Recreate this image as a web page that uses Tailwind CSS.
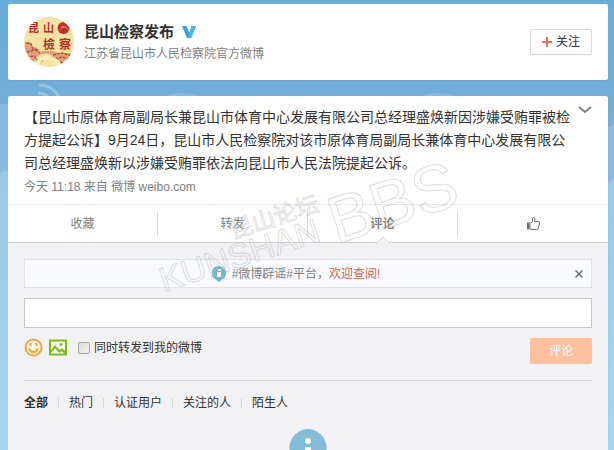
<!DOCTYPE html>
<html lang="zh-CN">
<head>
  <meta charset="UTF-8" />
  <meta name="viewport" content="width=device-width, initial-scale=1.0" />
  <title>昆山检察发布</title>
  <script src="https://cdn.jsdelivr.net/npm/@tailwindcss/browser@4"></script>
</head>
<body class="relative h-screen overflow-x-hidden overflow-y-auto [scrollbar-width:none] bg-[#a8d3ec] font-['Liberation_Sans','Noto_Sans_CJK_SC',sans-serif] text-xs text-[#333]">

  <!-- Sky decoration -->
  <svg class="absolute inset-0 w-full h-[450px]" viewBox="0 0 614 450" preserveAspectRatio="none" aria-hidden="true">
    <linearGradient id="sky" x2="0" y2="1">
      <stop stop-color="#6aaed8" />
      <stop offset=".25" stop-color="#72aed8" />
      <stop offset="1" stop-color="#a8d3ec" />
    </linearGradient>
    <linearGradient id="cloud" x2="0" y2="1">
      <stop stop-color="#9bc8e5" />
      <stop offset="1" stop-color="#a8d5ef" />
    </linearGradient>
    <path d="M0 0h614v450H0z" fill="url(#sky)" />
    <g fill="none" stroke="#93c4e4" stroke-width="3">
      <path d="M39 85c11 0 21 8 22 19" />
      <path d="M38 93c7 0 13 5 14 12" />
    </g>
    <ellipse cx="182" cy="106" rx="24" ry="13" fill="#82badf" />
    <ellipse cx="438" cy="106" rx="26" ry="13" fill="#82badf" />
    <path d="M0 104h10v80H0zM606 128l8-4v70h-8z" fill="#88bbdf" />
    <path d="M0 173q5-3 10-3v280H0z" fill="url(#cloud)" />
    <path d="M606 185l8-7v272h-8z" fill="url(#cloud)" />
  </svg>

  <main class="relative pt-1 pl-2 pr-1.5">

    <!-- Account header -->
    <header class="flex items-center rounded-xs bg-white px-4 py-[13px] shadow-xs">
      <svg class="size-[50px] shrink-0" viewBox="0 0 50 50" role="img" aria-label="昆山检察">
        <clipPath id="avatar"><circle cx="25" cy="25" r="25" /></clipPath>
        <g clip-path="url(#avatar)">
          <rect width="50" height="50" fill="#f5e3a3" />
          <path d="M1 25l5 0 2 4 6 2 1 4q12-3 20 1l14 0v5l-7 1-4 5-6-3-5-6q-8-3-13 1l-5 7-9-6z" fill="#dfa27c" />
          <path d="M2 26l5 1 2 5 6 1M3 35l8-2 5 3M2 40l8-1 3 4M29 38l9-2 10 3M31 42l8-2 7 3M14 47l5-4M36 45l6 2" fill="none" stroke="#b9503e" stroke-width="1.500" stroke-dasharray="3 1" />
          <path d="M14 48q2-9 12-7t10 9" fill="none" stroke="#fff0bd" stroke-width="3" />
          <circle cx="39.500" cy="11" r="6" fill="#bd3128" />
          <path d="M36 13q4-7 8 0M37 10h5" fill="none" stroke="#e67d5a" />
          <g fill="#b62e25" font-family="Noto Sans CJK SC" font-weight="bold">
            <text x="4" y="15" font-size="11">昆</text>
            <text x="19" y="15" font-size="11">山</text>
            <text x="19" y="32" font-size="12">檢</text>
            <text x="35" y="32" font-size="12">察</text>
          </g>
        </g>
      </svg>
      <div class="ml-2.5 min-w-0 flex-1">
        <h1 class="flex items-center gap-2 text-[15px] leading-6 font-bold">
          昆山检察发布
          <svg class="h-3 w-3.5" viewBox="0 0 14 12" role="img" aria-label="认证">
            <path d="M0 0h4.500l3 7 2-7H14L9 12H5z" fill="#35a2e6" />
            <path d="M9.500 0H14L9 12H7.500V7z" fill="#4fb3ee" />
          </svg>
        </h1>
        <p class="leading-5 text-[#808080]">江苏省昆山市人民检察院官方微博</p>
      </div>
      <button type="button" class="flex h-[26px] w-[62px] items-center justify-center gap-1 rounded-xs border border-[#d9d9d9] bg-white shadow-xs">
        <svg class="size-2.5" viewBox="0 0 10 10" aria-hidden="true"><path d="M5 0v10M0 5h10" stroke="#eb7350" stroke-width="2" /></svg>
        关注
      </button>
    </header>

    <!-- Post -->
    <article class="relative mt-4 rounded-xs bg-white shadow-xs">
      <div class="px-4 pt-2.5 pb-1">
        <p class="pr-4 text-sm leading-[23px]">【昆山市原体育局副局长兼昆山市体育中心发展有限公司总经理盛焕新因涉嫌受贿罪被检方提起公诉】9月24日，昆山市人民检察院对该市原体育局副局长兼体育中心发展有限公司总经理盛焕新以涉嫌受贿罪依法向昆山市人民法院提起公诉。</p>
        <p class="leading-[25px] text-[#808080]"><a href="#">今天 11:18</a> 来自 <a href="#">微博 weibo.com</a></p>
      </div>
      <button type="button" aria-label="更多" class="absolute top-2.5 right-4">
        <svg class="h-2 w-3.5" viewBox="0 0 14 8" fill="none"><path d="M1 1l6 5 6-5" stroke="#808080" stroke-width="2" /></svg>
      </button>

      <!-- Actions -->
      <div class="grid h-[39px] grid-cols-4 items-center border-t border-b border-t-[#e8e8e8] border-b-[#d0d0d4] text-[#808080]">
        <button type="button" class="h-6 border-r border-[#d9d9d9]">收藏</button>
        <button type="button" class="h-6 border-r border-[#d9d9d9]">转发</button>
        <button type="button" class="relative h-6 border-r border-[#d9d9d9] font-bold">
          评论
          <svg class="absolute top-full left-1/2 h-2 w-3.5 -translate-x-1/2" viewBox="0 0 14 8" aria-hidden="true"><path d="M0 8l7-7 7 7" fill="#f2f2f5" stroke="#d9d9d9" /></svg>
        </button>
        <button type="button" aria-label="赞" class="flex h-6 items-center justify-center">
          <svg class="size-[13px]" viewBox="0 0 13 13" fill="none" stroke="#696e78">
            <path d="M3 6.500l2.500-2V1.500Q5.500.5 6.500.5T8 2L7.500 4.500H11q1.500 0 1.500 1.500l-1 5q-.5 1.500-2 1.500H5q-1 0-2-1z" />
            <path d="M0 5.500h2.500v7H0z" fill="#696e78" stroke="none" />
          </svg>
        </button>
      </div>

      <!-- Comments -->
      <section class="rounded-b-xs bg-[#f2f2f5] px-4 pt-4">
        <div class="flex h-[29px] items-center border border-[#dde3ef] bg-[#f9faff] px-2">
          <p class="flex flex-1 items-center justify-center pr-4 text-[#808080]">
            <svg class="mr-1.5 h-4 w-3.5" viewBox="0 0 14 16" aria-hidden="true">
              <path d="M7 0a7 7 0 0 1 3 13.400L7 16l-3-2.600A7 7 0 0 1 7 0z" fill="#71b7cf" />
              <path d="M6 3h3v2H6zM5 6h4v5H5z" fill="#fff" />
            </svg>
            #微博辟谣#平台，<a href="#" class="text-[#d1694b]">欢迎查阅!</a>
          </p>
          <button type="button" aria-label="关闭">
            <svg class="size-2" viewBox="0 0 8 8"><path d="M.5 .5l7 7M7.500 .5l-7 7" stroke="#696e78" stroke-width="1.500" /></svg>
          </button>
        </div>

        <input type="text" aria-label="评论内容" class="mt-2.5 block h-[30px] w-full border border-[#c6c6cb] bg-white px-2 outline-none" />

        <div class="mt-2.5 flex items-start">
          <button type="button" aria-label="表情">
            <svg class="size-[19px]" viewBox="0 0 19 19" fill="none" stroke="#f7a53b" stroke-width="2">
              <circle cx="9.500" cy="9.500" r="8" fill="#fff8e8" />
              <path d="M5 10.500q1 3.500 4.500 3.500t4.500-3.500" />
              <path d="M6.500 5v3M12.500 5v3" />
            </svg>
          </button>
          <button type="button" aria-label="图片" class="ml-1.5">
            <svg class="h-[19px] w-[18px]" viewBox="0 0 18 19">
              <path d="M1 2.500h16v14H1z" fill="#f7fbea" stroke="#80b91e" stroke-width="2" />
              <path d="M2 12l4-5 4.500 5 2.500-2 3 3v3l-3.500-3-2 2L6 10.500 2 15z" fill="#80b91e" />
              <circle cx="12" cy="6.500" r="1.500" fill="#80b91e" />
            </svg>
          </button>
          <label class="ml-[11px] flex h-[19px] items-center gap-1">
            <input type="checkbox" class="size-3 appearance-none rounded-xs border border-[#a5a5a5] bg-linear-to-br from-[#dcdcdc] to-[#f2f2f2]" />
            同时转发到我的微博
          </label>
          <button type="button" class="ml-auto h-[26px] w-[62px] rounded-xs bg-[#ffc09f] text-white">评论</button>
        </div>

        <nav class="mt-4 flex items-center gap-2.5 border-t border-[#d9d9d9] pt-3">
          <a href="#" class="leading-5 font-bold">全部</a>
          <i class="h-2.5 w-px bg-[#d9d9d9]"></i>
          <a href="#" class="leading-5">热门</a>
          <i class="h-2.5 w-px bg-[#d9d9d9]"></i>
          <a href="#" class="leading-5">认证用户</a>
          <i class="h-2.5 w-px bg-[#d9d9d9]"></i>
          <a href="#" class="leading-5">关注的人</a>
          <i class="h-2.5 w-px bg-[#d9d9d9]"></i>
          <a href="#" class="leading-5">陌生人</a>
        </nav>

        <svg class="mx-auto mt-4 h-11 w-[38px]" viewBox="0 0 38 44" aria-hidden="true">
          <path d="M19 0a19 19 0 0 1 8 36l-8 8-8-8a19 19 0 0 1 8-36z" fill="#84bcd8" />
          <circle cx="19" cy="12" r="3" fill="#fff" />
          <path d="M16 18h6v12h-6z" fill="#fff" />
        </svg>
      </section>
    </article>

    <!-- Forum watermark -->
    <svg class="pointer-events-none absolute top-0 left-1/2 h-[320px] w-[320px] -translate-x-1/2" viewBox="148 0 320 320" aria-hidden="true">
      <g transform="rotate(-18 165 292)" fill="#fff" fill-opacity=".15" stroke="#aaa" stroke-opacity=".4" font-family="Liberation Sans">
        <text x="165" y="292" font-size="34">KUNSHAN</text>
        <text x="247" y="263" font-size="23" font-family="Noto Sans CJK SC">昆山论坛</text>
        <text x="344" y="300" font-size="66">BBS</text>
      </g>
    </svg>
  </main>

</body>
</html>
